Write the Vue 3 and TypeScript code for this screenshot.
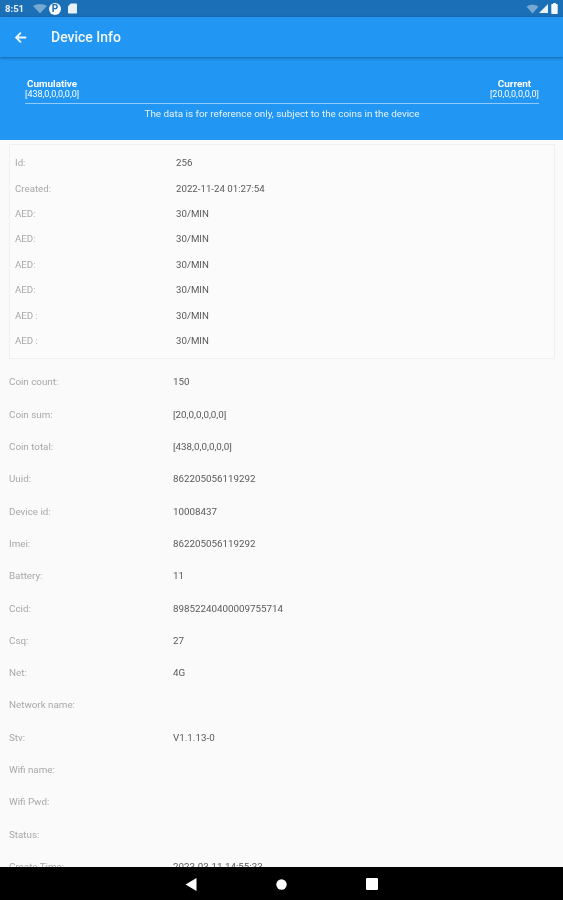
<script setup lang="ts">
const tableRows: [string, string][] = [
  ['Id:', '256'],
  ['Created:', '2022-11-24 01:27:54'],
  ['AED:', '30/MIN'],
  ['AED:', '30/MIN'],
  ['AED:', '30/MIN'],
  ['AED:', '30/MIN'],
  ['AED :', '30/MIN'],
  ['AED :', '30/MIN'],
]
const listRows: [string, string][] = [
  ['Coin count:', '150'],
  ['Coin sum:', '[20,0,0,0,0,0]'],
  ['Coin total:', '[438,0,0,0,0,0]'],
  ['Uuid:', '862205056119292'],
  ['Device id:', '10008437'],
  ['Imei:', '862205056119292'],
  ['Battery:', '11'],
  ['Ccid:', '89852240400009755714'],
  ['Csq:', '27'],
  ['Net:', '4G'],
  ['Network name:', ''],
  ['Stv:', 'V1.1.13-0'],
  ['Wifi name:', ''],
  ['Wifi Pwd:', ''],
  ['Status:', ''],
  ['Create Time:', '2023-03-11 14:55:33'],
]
</script>

<template>
  <div class="screen">
    <header class="status">
      <span class="time">8:51</span>
      <svg class="ic" width="14" height="11" viewBox="0 0 14 11"><path d="M0 3C4 .2 10 .2 14 3L7 10.500Z" fill="#fff" opacity=".4" /></svg>
      <span class="p-badge">P</span>
      <svg class="ic" width="9" height="11" viewBox="0 0 10 12"><path d="M3 .5h6a1 1 0 0 1 1 1v9a1 1 0 0 1-1 1H1a1 1 0 0 1-1-1V3.500Z" fill="#fff" opacity=".9" /></svg>
      <span class="spacer"></span>
      <svg class="ic" width="13" height="10" viewBox="0 0 13 11"><path d="M0 3C3.500.2 9.500.2 13 3L6.500 10.500Z" fill="#fff" opacity=".4" /></svg>
      <svg class="ic tri" width="9" height="9" viewBox="0 0 10 10"><path d="M10 0V10H0Z" fill="#fff" opacity=".9" /></svg>
      <svg class="ic bat" width="7" height="11" viewBox="0 0 7 12"><path d="M2 0h3v1h1.200a.8.8 0 0 1 .8.8v9.400a.8.8 0 0 1-.8.8H.8a.8.8 0 0 1-.8-.8V1.800A.8.8 0 0 1 .8 1H2Z" fill="#fff" opacity=".95" /></svg>
    </header>

    <div class="appbar">
      <svg class="back" width="13" height="13" viewBox="0 0 16 16"><path d="M15 8H3M8.500 2 2.500 8l6 6" fill="none" stroke="#f2f8fe" stroke-width="2.200" /></svg>
      <h1>Device Info</h1>
    </div>

    <section class="summary">
      <div class="totals">
        <div class="total"><strong>Cumulative</strong><span>[438,0,0,0,0,0]</span></div>
        <div class="total"><strong>Current</strong><span>[20,0,0,0,0,0]</span></div>
      </div>
      <p>The data is for reference only, subject to the coins in the device</p>
    </section>

    <main class="content">
      <div class="card">
        <div v-for="(r, i) in tableRows" :key="i" class="card-row">
          <span class="label">{{ r[0] }}</span>
          <span class="value">{{ r[1] }}</span>
        </div>
      </div>
      <div class="list">
        <div v-for="(r, i) in listRows" :key="i" class="list-row">
          <span class="label">{{ r[0] }}</span>
          <span class="value">{{ r[1] }}</span>
        </div>
      </div>
    </main>

    <nav class="navbar">
      <svg width="12" height="13" viewBox="0 0 12 13"><path d="M11.500 0V13L.5 6.500Z" fill="#fff" /></svg>
      <svg width="11" height="11" viewBox="0 0 11 11"><circle cx="5.500" cy="5.500" r="5.200" fill="#fff" /></svg>
      <svg width="12" height="12" viewBox="0 0 12 12"><rect width="12" height="12" rx="1" fill="#fff" /></svg>
    </nav>
  </div>
</template>

<style>
html, body { margin: 0; background: #fafafa; }
</style>

<style scoped>
.screen {
  width: 563px;
  height: 900px;
  display: flex;
  flex-direction: column;
  overflow: hidden;
  background: #fafafa;
  font-family: Roboto, "Liberation Sans", sans-serif;
}
.status {
  height: 17px;
  flex: none;
  background: #1a6fb6;
  display: flex;
  align-items: center;
  padding: 0 4px 0 5px;
  color: #e8f2fa;
}
.time { font-size: 9.500px; font-weight: 700; width: 28px; filter: blur(.5px); }
.ic { flex: none; filter: blur(.5px); }
.p-badge {
  width: 12px;
  height: 12px;
  border-radius: 50%;
  background: #f6fafd;
  color: #1a6fb6;
  font-size: 10px;
  font-weight: 700;
  line-height: 12px;
  text-align: center;
  margin: 0 7px 0 2px;
  filter: blur(.3px);
}
.spacer { flex: 1; }
.tri { margin: 0 3px 0 0; }
.bat { margin-right: 1px; }
.appbar {
  height: 40px;
  flex: none;
  background: #2196f3;
  display: flex;
  align-items: center;
  padding-left: 14px;
  box-shadow: 0 1px 3px rgba(0, 0, 0, .35);
  position: relative;
  z-index: 1;
}
.back { filter: blur(.4px); }
h1 {
  margin: 0 0 0 24px;
  font-size: 14px;
  font-weight: 500;
  color: #f2f8fe;
  filter: blur(.5px);
}
.summary {
  height: 82.500px;
  flex: none;
  box-sizing: border-box;
  background: #2196f3;
  padding: 21px 24px 0 25px;
  color: #fff;
}
.totals {
  display: flex;
  justify-content: space-between;
  border-bottom: 1px solid #90caf9;
  padding-bottom: 3px;
}
.total {
  display: flex;
  flex-direction: column;
  align-items: center;
  font-size: 9px;
  line-height: 11px;
  filter: blur(.5px);
}
.total strong { font-weight: 700; font-size: 9.900px; }
.summary p {
  margin: 3px 0 0;
  text-align: center;
  font-size: 9.900px;
  line-height: 14px;
  color: #e6f3fd;
  filter: blur(.5px);
}
.content {
  flex: 1;
  min-height: 0;
  overflow: hidden;
  padding: 4.500px 8px 0 9px;
}
.card {
  border: 1px solid #f0f0f0;
  padding: 5px 0 5px 5px;
  background: #fbfbfb;
}
.card-row {
  height: 25.400px;
  display: flex;
  align-items: center;
  font-size: 9.700px;
  filter: blur(.5px);
}
.card-row .label { width: 161px; }
.list { margin-top: 6.700px; }
.list-row {
  height: 32.300px;
  display: flex;
  align-items: center;
  font-size: 9.800px;
  filter: blur(.5px);
}
.list-row .label { width: 164px; }
.label { color: #a8a8a8; flex: none; }
.value { color: #5a5a5a; }
.navbar {
  height: 33px;
  flex: none;
  background: #000;
  display: flex;
  align-items: center;
  justify-content: center;
  gap: 79px;
  padding: 1px 0 0;
  box-sizing: border-box;
  position: relative;
  z-index: 2;
}
</style>
